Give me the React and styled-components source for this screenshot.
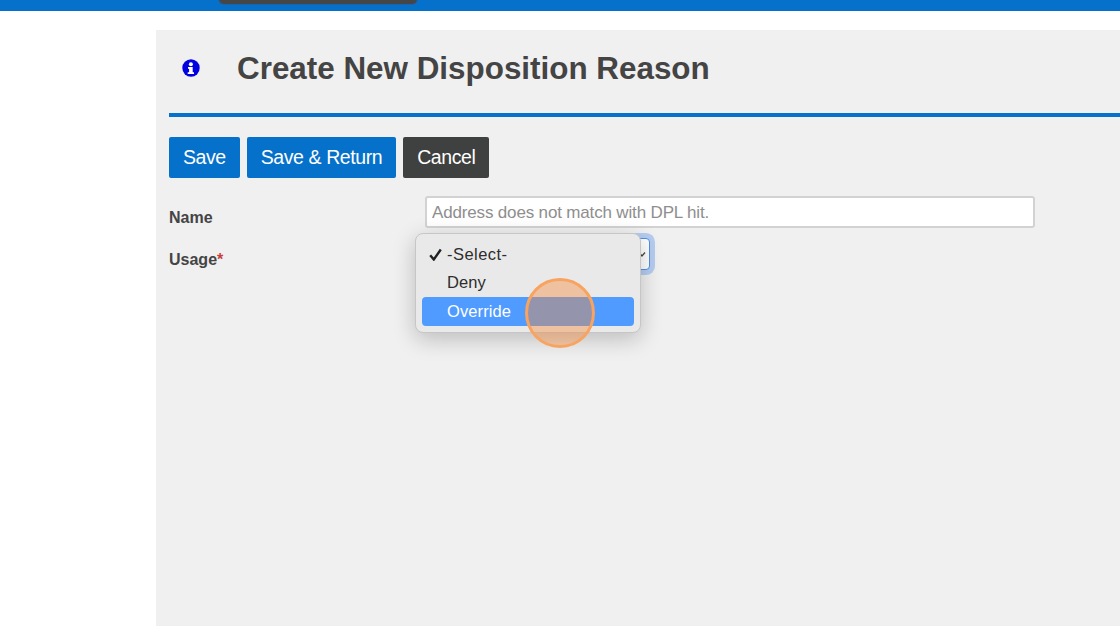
import React from "react";
import styled, { createGlobalStyle } from "styled-components";

const Global = createGlobalStyle`
  html, body { margin: 0; padding: 0; height: 100%; background: #fff; overflow: hidden; }
  body { font-family: "Liberation Sans", Arial, sans-serif; color: #444; }
  #root { height: 100%; }
`;
const Page = styled.div`display: flex; flex-direction: column; height: 626px; position: relative; overflow: hidden;`;
const TopBar = styled.div`height: 11px; flex: none; background: #0671ca; position: relative;`;
const TopTab = styled.div`position: absolute; left: 219px; top: -4px; width: 198px; height: 8px; background: #454648; border-radius: 0 0 5px 5px; box-shadow: 0 0 0 1px #1b63ab;`;
const Panel = styled.main`flex: 1; margin: 19px 0 0 156px; background: #f0f0f0; padding-left: 13px; display: flex; flex-direction: column;`;
const Header = styled.header`height: 83px; flex: none; display: flex; align-items: center; box-sizing: border-box; padding: 0 0 7px 13px; gap: 37px;`;
const InfoIcon = styled.svg`width: 18px; height: 18px; flex: none;`;
const Title = styled.h1`margin: 0; font-size: 31.4px; line-height: 38px; font-weight: 700; color: #444; position: relative; top: 1px;`;
const Rule = styled.div`height: 4px; background: #0671ca; flex: none;`;
const Toolbar = styled.div`display: flex; gap: 7px; margin-top: 20px;`;
const Button = styled.button`
  height: 41px; padding: 0 14px; border: 0; border-radius: 2px; font: 400 19.5px "Liberation Sans", Arial, sans-serif;
  letter-spacing: -0.42px; color: #fff; background: ${p => (p.$dark ? "#3f4140" : "#0671ca")};
`;
const Form = styled.form`display: flex; flex-direction: column; margin-top: 18px;`;
const Row = styled.div`display: grid; grid-template-columns: 256px 1fr; align-items: center; position: relative; height: 32px; margin-top: ${p => p.$mt || 0}px;`;
const Label = styled.label`font-size: 16px; font-weight: 700; color: #444; position: relative; top: 6px;`;
const Req = styled.span`color: #c8413b;`;
const Input = styled.input`
  width: 610px; height: 32px; box-sizing: border-box; border: 2px solid #d2d2d2; border-radius: 3px; background: #fff; padding: 1px 5px 0;
  font: 400 17px "Liberation Sans", Arial, sans-serif; letter-spacing: -0.16px;
  &::placeholder { color: #8e8e8e; opacity: 1; }
`;
const SelectBox = styled.div`
  width: 224px; height: 32px; margin-left: 1px; box-sizing: border-box; background: #fff; border: 1px solid #4f8fe8; border-radius: 4px;
  box-shadow: 0 0 0 5px #b5cdf1; position: relative;
`;
const Chevron = styled.svg`position: absolute; right: 3px; top: 11px; width: 8px; height: 8px;`;
const Menu = styled.ul`
  position: absolute; left: 246px; top: -5px; width: 226px; height: 100px; margin: 0; padding: 6px 6px; box-sizing: border-box; list-style: none;
  background: #e9e9e9; border: 1px solid #c6c6c6; border-radius: 8px; box-shadow: 0 6px 22px rgba(0,0,0,.22);
  display: flex; flex-direction: column;
`;
const Item = styled.li`
  height: 28.5px; flex: none; display: flex; align-items: center; position: relative; padding-left: 25px; border-radius: 4px;
  font-size: 16.5px; letter-spacing: ${p => (p.$wide ? "0.45px" : "0.1px")};
  color: ${p => (p.$active ? "#fff" : "#2d2d2d")}; background: ${p => (p.$active ? "#4f9bff" : "transparent")};
`;
const Check = styled.svg`position: absolute; left: 7px; top: 8px; width: 13px; height: 13px;`;
const Highlight = styled.div`
  position: absolute; left: 525px; top: 278px; width: 70px; height: 70px; box-sizing: border-box; border-radius: 50%;
  background: rgba(246,140,60,.42); border: 3px solid #f8a35f;
`;

export default function App() {
  return (
    <Page>
      <Global />
      <TopBar><TopTab /></TopBar>
      <Panel>
        <Header>
          <InfoIcon viewBox="0 0 18 18" aria-hidden="true">
            <circle cx="9" cy="9" r="8.7" fill="#0000e0" />
            <circle cx="8.9" cy="5.2" r="2" fill="#fff" />
            <path d="M6 8h4.7v5.2H12V15H5.7v-1.8h1.4V9.7H6z" fill="#fff" />
          </InfoIcon>
          <Title>Create New Disposition Reason</Title>
        </Header>
        <Rule />
        <Toolbar>
          <Button type="button">Save</Button>
          <Button type="button">Save &amp; Return</Button>
          <Button type="button" $dark>Cancel</Button>
        </Toolbar>
        <Form>
          <Row>
            <Label>Name</Label>
            <Input placeholder="Address does not match with DPL hit." />
          </Row>
          <Row $mt={10}>
            <Label>Usage<Req>*</Req></Label>
            <SelectBox>
              <Chevron viewBox="0 0 8 8"><path d="M1 2.5 4 6l3-3.5" fill="none" stroke="#444" strokeWidth="1.2" /></Chevron>
            </SelectBox>
            <Menu>
              <Item $wide>
                <Check viewBox="0 0 13 13"><path d="M1.2 7.2 4.8 11.5 11.8 1.5" fill="none" stroke="#222" strokeWidth="2.4" /></Check>
                -Select-
              </Item>
              <Item>Deny</Item>
              <Item $active>Override</Item>
            </Menu>
          </Row>
        </Form>
      </Panel>
      <Highlight />
    </Page>
  );
}
